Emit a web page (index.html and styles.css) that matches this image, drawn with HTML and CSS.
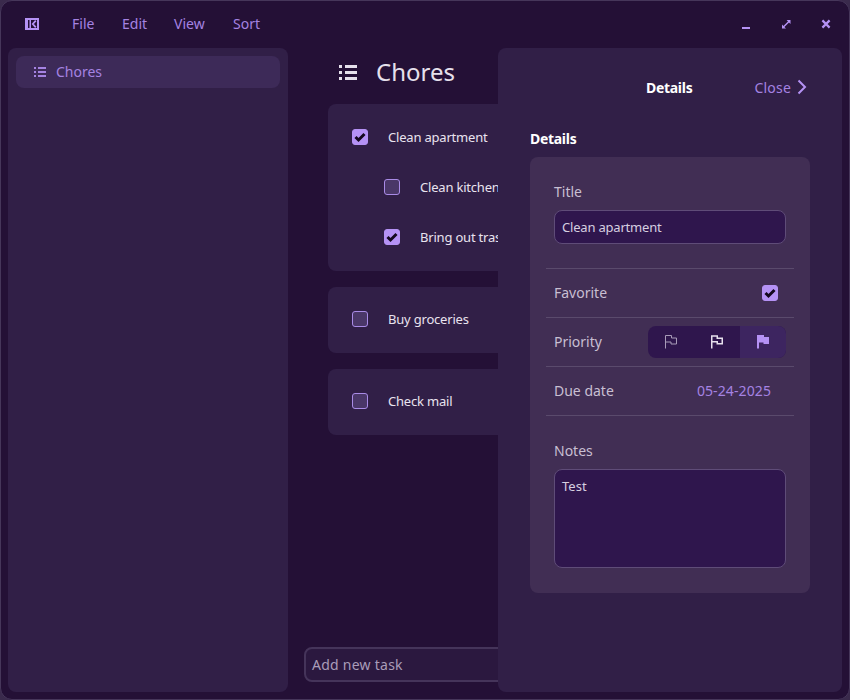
FILE: index.html
```html
<!DOCTYPE html>
<html lang="en">
<head>
<meta charset="utf-8">
<title>Chores</title>
<link rel="stylesheet" href="styles.css">
</head>
<body>
<svg class="defs" width="0" height="0" aria-hidden="true">
  <symbol id="check" viewBox="0 0 16 16"><path d="M3.500 8 6.500 11 12.500 5" fill="none" stroke="#14081f" stroke-width="3"/></symbol>
</svg>
<div class="window">
  <header class="titlebar">
    <svg class="logo" width="14" height="12" viewBox="0 0 14 12"><path fill-rule="evenodd" d="M0 0h14v12H0zM3 2v8h1.500V2zM6 2v8h6V2z" fill="#b592f5"/><path d="M10.800 2.600 7.800 6 10.800 9.400" fill="none" stroke="#b592f5" stroke-width="1.800"/></svg>
    <nav class="menu"><span class="m1">File</span><span class="m2">Edit</span><span class="m3">View</span><span>Sort</span></nav>
    <div class="controls">
      <svg width="10" height="10" viewBox="0 0 10 10"><path d="M1 8h8v2H1z" fill="#b592f5"/></svg>
      <svg width="10" height="10" viewBox="0 0 10 10"><path d="M5.600 1H9.500V5L8 3.400 3.400 8 5 9.500H1V5.600L2.400 7 7 2.400z" fill="#b592f5"/></svg>
      <svg width="10" height="10" viewBox="0 0 10 10"><path d="M1.400 1.400 8.600 8.600M8.600 1.400 1.400 8.600" stroke="#b592f5" stroke-width="2.200" fill="none"/></svg>
    </div>
  </header>
  <div class="content">
    <aside class="sidebar">
      <div class="side-item"><svg class="side-icon" width="12" height="10" viewBox="0 0 12 10"><path d="M0 0h2v2H0zM4 0h8v2H4zM0 4h2v2H0zM4 4h8v2H4zM0 8h2v2H0zM4 8h8v2H4z" fill="#a583e2"/></svg><span>Chores</span></div>
    </aside>
    <main class="main">
      <div class="heading"><svg class="heading-icon" width="18" height="15" viewBox="0 0 18 15"><path d="M0 0h3v3H0zM6 0h12v3H6zM0 6h3v3H0zM6 6h12v3H6zM0 12h3v3H0zM6 12h12v3H6z" fill="#e6e0ec"/></svg><h1>Chores</h1></div>
      <div class="tasks">
        <section class="card">
          <div class="task"><span class="box on"><svg><use href="#check"/></svg></span><span>Clean apartment</span></div>
          <div class="task sub"><span class="box"></span><span>Clean kitchen</span></div>
          <div class="task sub"><span class="box on"><svg><use href="#check"/></svg></span><span>Bring out trash</span></div>
        </section>
        <section class="card">
          <div class="task"><span class="box"></span><span>Buy groceries</span></div>
        </section>
        <section class="card">
          <div class="task"><span class="box"></span><span>Check mail</span></div>
        </section>
      </div>
      <div class="add-task">Add new task</div>
    </main>
  </div>
  <aside class="details">
    <div class="details-head">
      <strong class="details-title">Details</strong>
      <span class="close">Close <svg width="10" height="16" viewBox="0 0 10 16"><path d="M1.500 1.500 8 8 1.500 14.500" fill="none" stroke="#b592f5" stroke-width="2"/></svg></span>
    </div>
    <h2 class="section-title">Details</h2>
    <div class="panel">
      <div class="title-field">
        <label class="label">Title</label>
        <div class="input">Clean apartment</div>
      </div>
      <div class="row favorite"><span class="label">Favorite</span><span class="box on"><svg><use href="#check"/></svg></span></div>
      <div class="row priority"><span class="label">Priority</span>
        <div class="segments">
          <span class="seg"><svg width="14" height="14" viewBox="0 0 14 14"><path d="M1.500 13.500V.5H7.500V3H12.500V9H7V7H1.500" fill="none" stroke="#a89bb8" stroke-width="1"/></svg></span>
          <span class="seg"><svg width="14" height="14" viewBox="0 0 14 14"><path d="M1.750 13.500V1H7.250V3.250H12.250V8.750H7.250V6.750H1.750" fill="none" stroke="#e6e0ec" stroke-width="1.500"/></svg></span>
          <span class="seg active"><svg width="14" height="14" viewBox="0 0 14 14"><path d="M1 13.500V0H8V2H13V9H7.500V7.500H3V13.500z" fill="#b592f5"/></svg></span>
        </div>
      </div>
      <div class="row due"><span class="label">Due date</span><span class="date">05-24-2025</span></div>
      <div class="notes">
        <label class="label">Notes</label>
        <div class="textarea">Test</div>
      </div>
    </div>
  </aside>
</div>
</body>
</html>
```
FILE: styles.css
```css
* { box-sizing: border-box; }
html, body { margin: 0; height: 100%; background: #3a2a4c; }
body { font-family: "Noto Sans", sans-serif; font-size: 14px; color: #e9e3ef; }
.defs { position: absolute; }
.window {
  position: relative;
  width: 850px;
  height: 700px;
  background: #241036;
  border: 1px solid #46365a;
  border-radius: 12px;
  display: flex;
  flex-direction: column;
  overflow: hidden;
}
.titlebar { height: 47px; flex: none; display: flex; align-items: center; padding: 0 15px 1px 24px; }
.logo { flex: none; }
.menu { display: flex; margin-left: 33px; color: #a583e2; padding-bottom: 1px; }
.m1 { width: 50px; }
.m2 { width: 52px; }
.m3 { width: 59px; }
.controls { margin-left: auto; display: flex; gap: 30px; align-items: center; margin-right: 3px; }
.content { flex: 1; display: flex; padding: 0 7px 7px; min-height: 0; }
.sidebar { width: 280px; flex: none; background: #311f47; border-radius: 8px; padding: 8px; }
.side-item { height: 32px; background: #3d2a58; border-radius: 8px; display: flex; align-items: center; padding: 0 0 1px 18px; gap: 10px; color: #a583e2; }
.side-icon { flex: none; }
.main { flex: 1; min-width: 0; display: flex; flex-direction: column; padding-left: 16px; }
.heading { height: 56px; flex: none; display: flex; align-items: center; padding-left: 35px; gap: 19px; }
.heading-icon { flex: none; margin-bottom: 8px; }
h1 { margin: 0 0 10px; font-size: 24px; font-weight: 400; color: #e6e0ec; }
.tasks { display: flex; flex-direction: column; gap: 16px; padding-left: 24px; flex: 1; }
.card { background: #311f47; border-radius: 8px; padding: 7px 0 9px; width: 470px; }
.card:first-child { padding: 8px 0 9px; }
.task { height: 50px; display: flex; align-items: center; padding-left: 24px; gap: 20px; font-size: 13px; letter-spacing: -.2px; }
.task.sub { padding-left: 56px; }
.box {
  width: 16px; height: 16px; flex: none; border-radius: 3px;
  background: #4a3768; border: 1px solid #a98be6; display: inline-flex;
}
.box.on { background: #b592f5; border-color: #b592f5; }
.box svg { width: 16px; height: 16px; margin: -1px; flex: none; }
.add-task {
  height: 35px; flex: none; width: 400px; margin-bottom: 10px; display: flex; align-items: center; padding-left: 6px;
  background: #2b183f; border: 2px solid #45345a; border-radius: 8px;
  color: #a99cb8; font-size: 14px; letter-spacing: .25px;
}
.details {
  position: absolute; left: 497px; top: 47px; width: 344px; height: 644px;
  background: #311f47; border-radius: 8px;
  padding: 0 32px;
}
.details-head { position: relative; height: 80px; display: flex; align-items: center; justify-content: flex-end; padding-bottom: 2px; }
.details-title { position: absolute; left: 116px; font-weight: 700; font-size: 14px; color: #fff; letter-spacing: -.3px; }
.close { display: flex; align-items: center; gap: 6px; color: #a583e2; margin-right: 3px; letter-spacing: .2px; }
.section-title { margin: 0; height: 29px; font-size: 14px; line-height: 22px; font-weight: 700; color: #fff; letter-spacing: -.3px; }
.panel { width: 280px; height: 436px; background: #412e54; border-radius: 8px; padding: 0 16px; }
.label { color: #c8bfd2; }
.title-field { height: 112px; padding: 25px 8px 0; border-bottom: 1px solid #5a4a6c; display: flex; flex-direction: column; }
.title-field .label { line-height: 20px; margin-bottom: 8px; }
.input {
  height: 34px; background: #2f164d; border: 1px solid #5f4c78; border-radius: 8px;
  display: flex; align-items: center; padding-left: 7px; font-size: 13px; color: #d6cfe0; letter-spacing: -.2px;
}
.row { height: 49px; display: flex; align-items: center; justify-content: space-between; padding: 0 8px; border-bottom: 1px solid #5a4a6c; }
.row .label { margin-bottom: 2px; }
.favorite { padding-right: 16px; }
.segments { width: 138px; height: 32px; display: flex; background: #2f164d; border-radius: 8px; overflow: hidden; }
.seg { flex: 1; display: flex; align-items: center; justify-content: center; }
.seg.active { background: #3d2560; }
.date { color: #a583e2; padding-right: 15px; margin-bottom: 2px; letter-spacing: .1px; }
.notes { padding: 24px 8px 0; display: flex; flex-direction: column; }
.notes .label { line-height: 22px; margin-bottom: 7px; }
.textarea {
  height: 99px; background: #2f164d; border: 1px solid #5f4c78; border-radius: 8px;
  padding: 7px; font-size: 13px; color: #d6cfe0;
}
```
